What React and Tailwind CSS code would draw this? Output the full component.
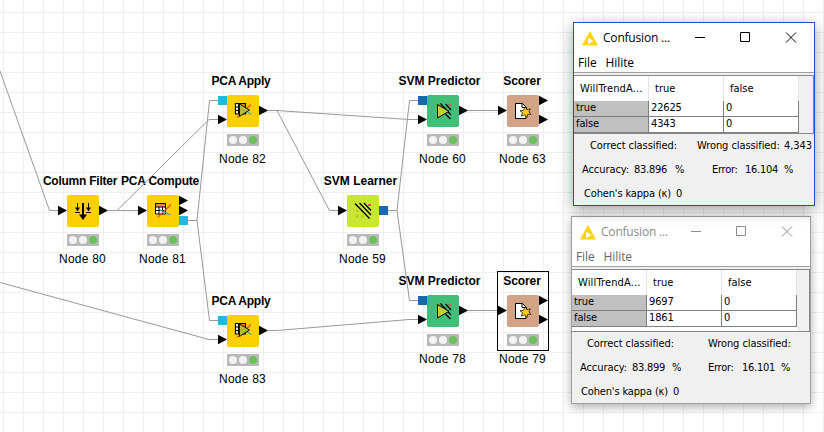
import React from 'react';

const YELLOW = 'bg-[#ffd000]';
const NODES = [
  { x: 67, y: 195, title: 'Column Filter', label: 'Node 80', color: YELLOW, icon: 'filter', ts: 'mr-[6px] tracking-[-0.24px]' },
  { x: 147, y: 195, title: 'PCA Compute', label: 'Node 81', color: YELLOW, icon: 'compute', ts: 'mr-[6px] tracking-[-0.18px]' },
  { x: 227, y: 95, title: 'PCA Apply', label: 'Node 82', color: YELLOW, icon: 'apply', ts: 'mr-[4px] tracking-[-0.24px]' },
  { x: 227, y: 315, title: 'PCA Apply', label: 'Node 83', color: YELLOW, icon: 'apply', ts: 'mr-[4px] tracking-[-0.24px]' },
  { x: 347, y: 195, title: 'SVM Learner', label: 'Node 59', color: 'bg-[#c8e632]', icon: 'learner', ts: 'mr-[5px]' },
  { x: 427, y: 95, title: 'SVM Predictor', label: 'Node 60', color: 'bg-[#41be78]', icon: 'predictor', ts: 'mr-[7px]' },
  { x: 507, y: 95, title: 'Scorer', label: 'Node 63', color: 'bg-[#d2a387]', icon: 'scorer', ts: 'mr-[2px] tracking-[-0.1px]' },
  { x: 427, y: 295, title: 'SVM Predictor', label: 'Node 78', color: 'bg-[#41be78]', icon: 'predictor', ts: 'mr-[7px]' },
  { x: 507, y: 295, title: 'Scorer', label: 'Node 79', color: 'bg-[#d2a387]', icon: 'scorer', ts: 'mr-[2px] tracking-[-0.1px]' },
];

function Icon({ kind }) {
  return (
    <svg width="32" height="32" viewBox="0 0 32 32" fill="none" stroke="#000">
      {kind === 'filter' && (
        <>
          <path d="M16 8v12" strokeWidth="2" />
          <path d="M12 19.500h8l-4 5.500z" fill="#000" stroke="none" />
          <path d="M10.500 8v5M21.500 8v5M8 17.500h5M19 17.500h5" />
          <path d="M8 12.500h5l-2.500 4zM19 12.500h5l-2.500 4z" fill="#000" stroke="none" />
        </>
      )}
      {kind === 'compute' && (
        <>
          <path d="M8 8h11v11H8z" fill="#fff" stroke="none" />
          <path d="M8 8h11v4H8z" fill="#f58a3c" stroke="none" />
          <path d="M8.500 8.500h10v10.500h-10zM8 12h11M8 15.500h11M12 12v7M15.500 12v7" />
          <path d="M11 22L24 9.500" stroke="#e8503c" strokeWidth="1.300" />
          <path d="M13 15L23.500 20" stroke="#39a9b8" strokeWidth="1.200" />
        </>
      )}
      {kind === 'apply' && (
        <>
          <path d="M8 8h11v11H8z" fill="#fff" stroke="none" />
          <path d="M12 8h7v4h-7z" fill="#f58220" stroke="none" />
          <path d="M8.500 8.500h10v10.500h-10zM11.500 8v11M8 12h4M8 15.500h4" strokeWidth="1.200" />
          <path d="M10 22.500L24 9.500" stroke="#e8503c" strokeWidth="1.300" />
          <path d="M18 15l6 4.500" stroke="#39a9b8" strokeWidth="1.300" />
          <path d="M12.500 9v12.500l10-6.500z" fill="#b5bd2b" strokeWidth=".9" />
        </>
      )}
      {kind === 'learner' && (
        <>
          <path d="M21 9h3v2h-3z" fill="#e8505c" stroke="none" />
          <path d="M9 15h2v2H9zM9 20h2.500v2.500H9zM14 20h2.500v2.500H14zM14 15h2v2h-2z" fill="#bac51e" stroke="none" />
          <path d="M8 8.500L22.500 23.500M12.500 8L24 20M17 8l7 7.500" strokeWidth="1.300" />
        </>
      )}
      {kind === 'predictor' && (
        <>
          <path d="M21.500 9h2.500v2h-2.500z" fill="#e8505c" stroke="none" />
          <path d="M13 13.500L23.500 24M13.500 8.500L24 20M18.500 9l5.500 6" strokeWidth="1.200" />
          <path d="M10.500 9.500v13.500l11.500-6.700z" fill="#c3cf36" strokeWidth="1" />
        </>
      )}
      {kind === 'scorer' && (
        <>
          <path d="M8.500 8.500h7l3.500 3.500v11.500H8.500z" fill="#fff" />
          <path d="M15 8v4.500h4.500" />
          <path d="M18.500 11.500l1.300 3.200 3.600-.8-1.500 3 2.200 2.300-3.400.1-.9 3.200-2.100-2.600-3.400 1.200 1.200-3.400-2.500-2 3.500-.4z" fill="#ffc814" strokeWidth=".7" />
        </>
      )}
    </svg>
  );
}

function Node({ node }) {
  return (
    <div
      className="absolute flex w-[120px] -translate-x-1/2 flex-col items-center whitespace-nowrap text-[12px] text-black"
      style={{ left: node.x + 16, top: node.y - 22 }}
    >
      <div className={`h-[22px] font-bold leading-[16px] ${node.ts}`}>{node.title}</div>
      <div className={`h-8 w-8 rounded-[2px] ${node.color}`}>
        <Icon kind={node.icon} />
      </div>
      <div className="mt-[7px] flex h-3 w-8 items-center justify-center gap-[2px] rounded-[1px] bg-[#b9b9b9]">
        <span className="h-2 w-2 rounded-full bg-[#f2f2f2]" />
        <span className="h-2 w-2 rounded-full bg-[#f2f2f2]" />
        <span className="h-2 w-2 rounded-full bg-[#6cc05c]" />
      </div>
      <div className="mt-[5px] mr-px leading-[16px] tracking-[0.22px]">{node.label}</div>
    </div>
  );
}

const LINES = [
  '0,71 49.5,210.5 58,210.5',
  '108,210.5 138,210.5',
  '117,210.5 209,119.5 218,119.5',
  '188,220.5 197,220.5 209.5,100.5 218,100.5',
  '197,220.5 209.5,320.5 218,320.5',
  '268,110.5 277,110.5 409,119.5 418,119.5',
  '277,110.5 329.500,210.5 338,210.5',
  '388,210.5 397,210.5 409.5,100.5 418,100.5',
  '397,210.5 409.5,300.5 418,300.5',
  '0,282.5 209,339.5 218,339.5',
  '268,330.5 277,330.5 409,319.5 418,319.5',
  '468,110.5 498,110.5',
  '468,310.5 498,310.5',
];
const ARROWS = [
  [58, 210.5], [99, 210.5], [138, 210.5], [179, 200.5], [179, 210.5],
  [218, 119.5], [259, 110.5], [218, 339.5], [259, 330.5], [338, 210.5],
  [418, 119.5], [459, 110.5], [498, 110.5], [539, 100.5], [539, 119.5],
  [418, 319.5], [459, 310.5], [498, 310.5], [539, 300.5], [539, 319.5],
];
const SQUARES = [
  [179, 216, '#23b8e0'], [218, 96, '#23b8e0'], [218, 316, '#23b8e0'],
  [379, 206, '#1769b4'], [418, 96, '#1769b4'], [418, 296, '#1769b4'],
];

function Connections() {
  return (
    <svg className="absolute inset-0" width="824" height="432">
      {LINES.map((p) => <polyline key={p} points={p} fill="none" stroke="#999" />)}
      {ARROWS.map(([x, y]) => (
        <path key={`${x},${y}`} d={`M${x} ${y - 4.7}l9 4.700-9 4.700z`} />
      ))}
      {SQUARES.map(([x, y, c]) => <rect key={`${x},${y}`} x={x} y={y} width="9" height="9" fill={c} />)}
      <rect x="497.5" y="271.5" width="51" height="79" fill="none" stroke="#000" />
    </svg>
  );
}

function Controls() {
  return (
    <svg width="102" height="12" viewBox="0 0 102 12" fill="none" stroke="currentColor">
      <path d="M0 5.500h10M45.500 .5h9v9h-9z" />
      <path d="M91 .5l10 10M101 .5l-10 10" />
    </svg>
  );
}

function MatrixRow({ cells }) {
  return (
    <div className="flex h-4 leading-[14px]">
      <div className="w-[75px] border-r border-b border-[#808080] bg-[#c0c0c0] pl-[2px] tracking-[-0.1px]">{cells[0]}</div>
      <div className="w-[75px] border-r border-b border-[#808080] bg-white pl-[2px] tracking-[-0.15px]">{cells[1]}</div>
      <div className="w-[75px] border-r border-b border-[#808080] bg-white pl-[2px]">{cells[2]}</div>
    </div>
  );
}

function ConfusionWindow({ active, rows, stats }) {
  return (
    <div
      className={
        active
          ? 'absolute left-[573px] top-[22px] flex h-[184px] w-[242px] flex-col border border-[#1f4fc0] bg-[#f0f0f0] shadow-[0_4px_14px_rgba(0,0,0,0.38)]'
          : 'absolute left-[571px] top-[216px] flex h-[188px] w-[240px] flex-col border border-[#a0a0a0] bg-[#f0f0f0] shadow-[0_3px_9px_rgba(0,0,0,0.32)]'
      }
    >
      <div className={`flex h-[30px] shrink-0 items-center bg-white pl-2 text-[12px] ${active ? 'text-black' : 'text-[#8c8c8c]'}`}>
        <svg width="16" height="15" viewBox="0 0 16 15">
          <path d="M8 0l8 14.500H0z" fill="#ffd600" />
          <path d="M6 6.800l5.500 3.200-5.500 3.200z" fill="#fff" />
        </svg>
        <span className={`ml-[5px] ${active ? 'w-[92px]' : 'w-[90px]'} whitespace-nowrap font-['Open_Sans',sans-serif] tracking-[-0.2px]`}>Confusion ...</span>
        <Controls />
      </div>
      <div className={`flex h-[19px] shrink-0 items-center gap-[9px] bg-white pl-1 font-['Open_Sans',sans-serif] text-[12px] tracking-[-0.1px] ${active ? 'text-black' : 'text-[#666]'}`}>
        <span>File</span>
        <span>Hilite</span>
      </div>
      <div className="h-[3px] shrink-0 border-t border-[#a0a0a0] bg-[#f0f0f0]" />
      <div className={`${active ? 'h-[59px]' : 'h-[63px]'} shrink-0 overflow-hidden border-t border-r border-b border-[#828790] bg-[#f0f0f0] text-[11px]`}>
        <div className={active ? 'h-full w-[225px]' : 'h-full w-[225px] bg-white'}>
          <div className="flex h-[25px] items-center bg-white">
            <span className="h-full w-[75px] border-r border-[#e5e5e5] pl-[6px] leading-[26px] tracking-[0.15px]">WillTrendA...</span>
            <span className="h-full w-[75px] border-r border-[#e5e5e5] pl-[6px] leading-[26px]">true</span>
            <span className="h-full w-[75px] border-r border-[#e5e5e5] pl-[6px] leading-[26px]">false</span>
          </div>
          {rows.map((r) => <MatrixRow key={r[0]} cells={r} />)}
        </div>
      </div>
      <div className="flex flex-col whitespace-nowrap text-[11px] leading-6 text-black">
        {stats.map((row, i) => (
          <div key={i} className="flex h-6">
            {row.map(([text, width, spacing]) => (
              <span key={width + text} className={`shrink-0 ${spacing}`} style={{ width }}>{text}</span>
            ))}
          </div>
        ))}
      </div>
    </div>
  );
}

const T = 'tracking-[-0.25px]';
const W = 'tracking-[-0.08px]';
const ACTIVE_STATS = [
  [['', 16, T], ['Correct classified:', 107, W], ['Wrong classified:', 87, W], ['4,343', 30, W]],
  [['', 8, T], ['Accuracy:', 52, W], ['83.896', 41, T], ['%', 37, T], ['Error:', 33, T], ['16.104', 39, T], ['%', 12, T]],
  [['', 10, T], ["Cohen's kappa (κ)", 92, 'tracking-[-0.15px]'], ['0', 10, T]],
];
const INACTIVE_STATS = [
  [['', 15, T], ['Correct classified:', 121, W], ['Wrong classified:', 87, W]],
  [['', 8, T], ['Accuracy:', 52, W], ['83.899', 40, T], ['%', 36, T], ['Error:', 34, T], ['16.101', 39, T], ['%', 12, T]],
  [['', 9, T], ["Cohen's kappa (κ)", 92, 'tracking-[-0.15px]'], ['0', 10, T]],
];

export default function App() {
  return (
    <main className="relative h-[432px] w-[824px] overflow-hidden bg-white bg-[linear-gradient(to_right,#efefef_1px,transparent_1px),linear-gradient(to_bottom,#efefef_1px,transparent_1px)] bg-[size:20px_20px] bg-[position:3px_12px] font-['Liberation_Sans',Arial,sans-serif]">
      {NODES.map((n) => <Node key={n.label} node={n} />)}
      <Connections />
      <div className="font-['DejaVu_Sans_Condensed','DejaVu_Sans',sans-serif]">
        <ConfusionWindow rows={[['true', '9697', '0'], ['false', '1861', '0']]} stats={INACTIVE_STATS} />
        <ConfusionWindow active rows={[['true', '22625', '0'], ['false', '4343', '0']]} stats={ACTIVE_STATS} />
      </div>
    </main>
  );
}
